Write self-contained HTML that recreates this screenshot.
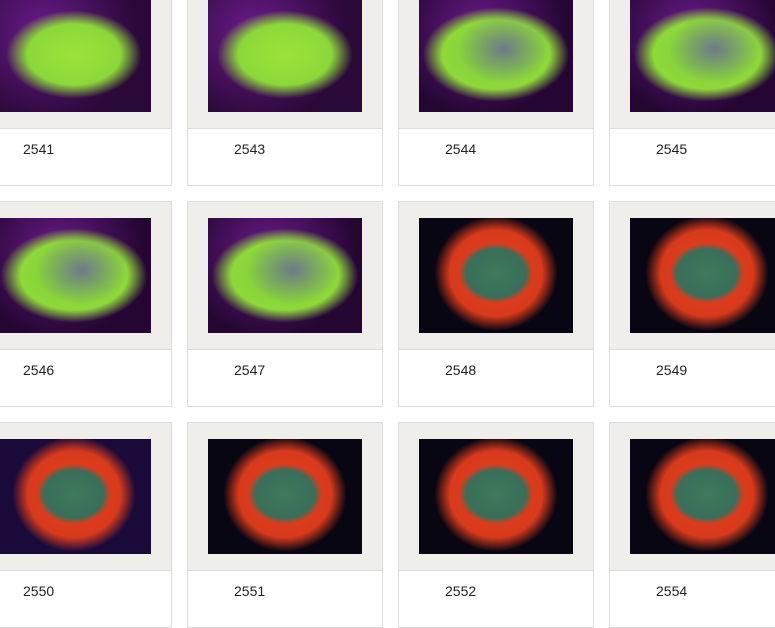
<!DOCTYPE html>
<html><head><style>
body{margin:0;width:775px;height:625px;overflow:hidden;background:#fff;position:relative;font-family:"Liberation Sans",sans-serif}
.c{position:absolute;width:194px;height:204px;border:1px solid #dcdcdc;background:#fff}
.g{position:absolute;left:0;top:0;width:194px;height:147px;background:#efeeeb;border-bottom:1px solid #dcdcdc}
.i{position:absolute;left:20px;top:16px;width:154px;height:115px}
.t{position:absolute;left:46px;top:160px;font-size:14px;color:#222}
.gr{background:radial-gradient(ellipse 55% 48% at 50% 50%,#9be33a 0%,#8cd83a 55%,rgba(120,200,60,0) 80%),radial-gradient(circle at 30% 30%,#6a1a8a,#2a0838 70%)}
.gv{background:radial-gradient(ellipse 30% 30% at 55% 45%,#6f7a8a,rgba(0,0,0,0) 100%),radial-gradient(ellipse 58% 50% at 50% 50%,#7fcf3a 0%,#8ed83a 60%,rgba(120,200,60,0) 82%),radial-gradient(circle at 40% 30%,#6a1a8a,#250633 70%)}
.rd{background:radial-gradient(ellipse 24% 26% at 50% 48%,#3d7a5a 0%,#3a6e5a 80%,rgba(0,0,0,0) 100%),radial-gradient(ellipse 40% 50% at 50% 48%,#e2401f 0%,#d83a1c 75%,rgba(150,20,20,0) 100%),#080612}
</style></head><body>
<div class="c" style="left:-24px;top:-20px"><div class="g"><div class="i gr"></div></div><div class="t">2541</div></div>
<div class="c" style="left:187px;top:-20px"><div class="g"><div class="i gr"></div></div><div class="t">2543</div></div>
<div class="c" style="left:398px;top:-20px"><div class="g"><div class="i gv"></div></div><div class="t">2544</div></div>
<div class="c" style="left:609px;top:-20px"><div class="g"><div class="i gv"></div></div><div class="t">2545</div></div>
<div class="c" style="left:-24px;top:201px"><div class="g"><div class="i gv"></div></div><div class="t">2546</div></div>
<div class="c" style="left:187px;top:201px"><div class="g"><div class="i gv"></div></div><div class="t">2547</div></div>
<div class="c" style="left:398px;top:201px"><div class="g"><div class="i rd"></div></div><div class="t">2548</div></div>
<div class="c" style="left:609px;top:201px"><div class="g"><div class="i rd"></div></div><div class="t">2549</div></div>
<div class="c" style="left:-24px;top:422px"><div class="g"><div class="i rd" style="background-color:#1a0a3a"></div></div><div class="t">2550</div></div>
<div class="c" style="left:187px;top:422px"><div class="g"><div class="i rd"></div></div><div class="t">2551</div></div>
<div class="c" style="left:398px;top:422px"><div class="g"><div class="i rd"></div></div><div class="t">2552</div></div>
<div class="c" style="left:609px;top:422px"><div class="g"><div class="i rd"></div></div><div class="t">2554</div></div>
</body></html>
